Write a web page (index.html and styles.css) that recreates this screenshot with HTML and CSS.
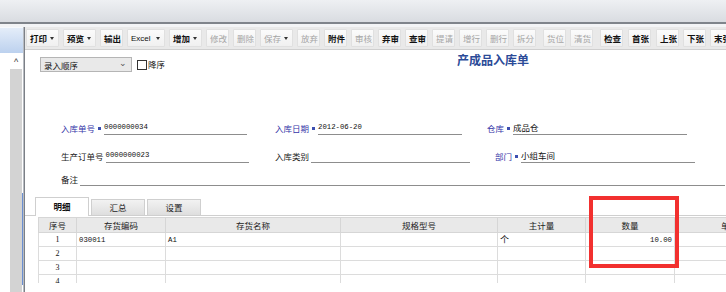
FILE: index.html
```html
<!DOCTYPE html>
<html lang="zh-CN">
<head>
  <meta charset="UTF-8">
  <title>产成品入库单</title>
  <link rel="stylesheet" href="styles.css">
</head>
<body>
  <div class="topband"></div>
  <div class="workspace">
    <div class="side">
      <div class="side-head"></div>
      <div class="side-body">
        <div class="side-gap"></div>
        <div class="scroll">
          <div class="scroll-up">&#94;</div>
          <div class="scroll-track"></div>
        </div>
        <div class="side-strip"><div class="strip-blue"></div></div>
      </div>
    </div>
    <div class="divider"></div>
    <div class="main">
      <div class="toolbar">
        <span class="tb dd first">打印<i class="caret"></i></span>
        <span class="tb dd">预览<i class="caret"></i></span>
        <span class="tb">输出</span>
        <span class="tb dd excel">Excel<i class="caret"></i></span>
        <span class="tb dd">增加<i class="caret"></i></span>
        <span class="tb off">修改</span>
        <span class="tb off">删除</span>
        <span class="tb dd off">保存<i class="caret"></i></span>
        <span class="tb off">放弃</span>
        <span class="tb">附件</span>
        <span class="tb off">审核</span>
        <span class="tb">弃审</span>
        <span class="tb">查审</span>
        <span class="tb off">提请</span>
        <span class="tb off">增行</span>
        <span class="tb off">删行</span>
        <span class="tb off">拆分</span>
        <span class="tb off wide">货位</span>
        <span class="tb off">清货</span>
        <span class="tb wide">检查</span>
        <span class="tb mid">首张</span>
        <span class="tb mid">上张</span>
        <span class="tb">下张</span>
        <span class="tb">末张</span>
      </div>

      <div class="content">
        <div class="head-row">
          <div class="select">录入顺序<span class="chev">&#8964;</span></div>
          <span class="check"></span>
          <span class="check-label">降序</span>
          <h1 class="doc-title">产成品入库单</h1>
        </div>

        <div class="form-row row1">
          <div class="field f1">
            <span class="label req">入库单号</span><i class="mark"></i>
            <span class="value w143">0000000034</span>
          </div>
          <div class="field f2">
            <span class="label req">入库日期</span><i class="mark"></i>
            <span class="value w144">2012-06-20</span>
          </div>
          <div class="field">
            <span class="label req">仓库</span><i class="mark"></i>
            <span class="value cn w174">成品仓</span>
          </div>
        </div>

        <div class="form-row row2">
          <div class="field f1">
            <span class="label">生产订单号</span>
            <span class="value w143">0000000023</span>
          </div>
          <div class="field f2b">
            <span class="label">入库类别</span>
            <span class="value w159"></span>
          </div>
          <div class="field">
            <span class="label req">部门</span><i class="mark"></i>
            <span class="value cn w174">小组车间</span>
          </div>
        </div>

        <div class="form-row row3">
          <div class="field">
            <span class="label">备注</span>
            <span class="value grow"></span>
          </div>
        </div>

        <div class="tabs">
          <span class="tab active">明细</span>
          <span class="tab">汇总</span>
          <span class="tab">设置</span>
        </div>

        <div class="grid-wrap">
          <table class="grid">
            <colgroup>
              <col class="c-no"><col class="c-code"><col class="c-name"><col class="c-spec">
              <col class="c-unit"><col class="c-qty"><col class="c-price">
            </colgroup>
            <thead>
              <tr><th>序号</th><th>存货编码</th><th>存货名称</th><th>规格型号</th><th>主计量</th><th>数量</th><th>单价</th></tr>
            </thead>
            <tbody>
              <tr><td class="num">1</td><td class="mono">030011</td><td class="mono">A1</td><td></td><td class="cn">个</td><td class="mono right">10.00</td><td></td></tr>
              <tr><td class="num">2</td><td></td><td></td><td></td><td></td><td></td><td></td></tr>
              <tr><td class="num">3</td><td></td><td></td><td></td><td></td><td></td><td></td></tr>
              <tr><td class="num">4</td><td></td><td></td><td></td><td></td><td></td><td></td></tr>
            </tbody>
          </table>
        </div>
      </div>
    </div>
  </div>
  <div class="highlight"></div>
</body>
</html>
```

FILE: styles.css
```css
body {
  margin: 0;
  width: 726px;
  height: 292px;
  overflow: hidden;
  position: relative;
  background: #ffffff;
  font-family: "Noto Sans CJK SC", "Liberation Sans", sans-serif;
  font-size: 8.5px;
  color: #222;
}
.topband {
  height: 22px;
  background: linear-gradient(to bottom, #eef0f3, #d9dce1);
  border-bottom: 2px solid #7f848b;
}
.workspace {
  display: flex;
  height: 268px;
  padding-top: 3px;
  background: #f3f4f6;
}
.side {
  width: 23px;
  display: flex;
  flex-direction: column;
}
.side-head {
  height: 25px;
  background: linear-gradient(to bottom, #e4edf9, #bcd1ee);
  border-top: 1px solid #f6f9fd;
}
.side-body {
  flex: 1;
  display: flex;
  background: #ffffff;
}
.side-gap {
  width: 10px;
}
.scroll {
  width: 12px;
  display: flex;
  flex-direction: column;
}
.scroll-up {
  height: 16px;
  font-size: 9px;
  line-height: 18px;
  text-align: center;
  color: #333;
  font-family: "Liberation Sans", sans-serif;
}
.scroll-track {
  flex: 1;
  background: #d3d3d3;
}
.side-strip {
  width: 1px;
  display: flex;
  flex-direction: column;
  justify-content: flex-end;
  padding-bottom: 10px;
}
.strip-blue {
  height: 92px;
  background: #6b8fd1;
  width: 2px;
}
.divider {
  width: 2px;
  background: #fafafa;
  border-left: 1px solid #b8bcc2;
  border-right: 1px solid #7c8087;
}
.main {
  flex: 1;
  display: flex;
  flex-direction: column;
  background: #ffffff;
}
.toolbar {
  height: 22px;
  display: flex;
  align-items: center;
  background: #e9e9e9;
  border-bottom: 1px solid #cfcfcf;
  white-space: nowrap;
  overflow: hidden;
}
.tb {
  flex: none;
  display: flex;
  align-items: center;
  box-sizing: border-box;
  width: 23px;
  height: 18px;
  padding-left: 3px;
  margin-left: 4px;
  background: linear-gradient(to bottom, #fbfbfb, #f0f0f0);
  border: 1px solid #e0e0e0;
  border-radius: 1px;
  color: #111;
  font-weight: bold;
}
.tb.first {
  margin-left: 1px;
}
.tb.dd {
  width: 33px;
}
.tb.excel {
  width: 38px;
  font-family: "Liberation Sans", sans-serif;
  font-weight: normal;
  font-size: 8px;
}
.tb.off {
  color: #a5a5a5;
  font-weight: normal;
}
.tb.wide {
  margin-left: 7px;
}
.tb.mid {
  margin-left: 5px;
}
.caret {
  margin-left: auto;
  margin-right: 4px;
  width: 0;
  height: 0;
  border-left: 2.5px solid transparent;
  border-right: 2.5px solid transparent;
  border-top: 3px solid #333;
}
.content {
  flex: 1;
  overflow: hidden;
}
.head-row {
  display: flex;
  align-items: flex-start;
  padding: 7px 0 0 15px;
  height: 16px;
}
.select {
  box-sizing: border-box;
  width: 92px;
  height: 15px;
  display: flex;
  align-items: center;
  padding-left: 3px;
  background: #e9e9e9;
  border: 1px solid #b5b5b5;
  color: #111;
}
.chev {
  margin-left: auto;
  margin-right: 4px;
  font-size: 9px;
  line-height: 9px;
  color: #555;
  padding-bottom: 4px;
}
.check {
  box-sizing: border-box;
  width: 10px;
  height: 10px;
  margin: 3px 1px 0 5px;
  border: 1px solid #333;
  background: #fff;
}
.check-label {
  line-height: 15px;
  color: #111;
}
.doc-title {
  margin: -5px 0 0 292px;
  font-size: 12px;
  line-height: 16px;
  font-weight: bold;
  color: #2b4b98;
}
.form-row {
  display: flex;
  height: 14px;
}
.row1 {
  margin-top: 48px;
}
.row2 {
  margin-top: 14px;
}
.row3 {
  margin-top: 9px;
}
.field {
  display: flex;
  align-items: flex-end;
  height: 14px;
}
.form-row > .field:first-child {
  margin-left: 36px;
}
.f1 {
  width: 214px;
}
.f2 {
  width: 212px;
}
.f2b {
  width: 220px;
}
.label {
  line-height: 14px;
  color: #222;
  margin-right: 2px;
}
.label.req {
  color: #3535a8;
}
.mark {
  width: 3px;
  height: 3px;
  background: #3d4fb0;
  margin: 0 3px 5px 1px;
}
.value {
  box-sizing: border-box;
  height: 13px;
  border-bottom: 1px solid #8d8d8d;
  font-family: "Liberation Mono", monospace;
  font-size: 7.3px;
  line-height: 10px;
  color: #111;
}
.value.cn {
  font-family: "Noto Sans CJK SC", sans-serif;
  font-size: 8.5px;
  line-height: 11px;
}
.w143 {
  width: 143px;
}
.w144 {
  width: 144px;
}
.w159 {
  width: 159px;
}
.w174 {
  width: 174px;
}
.grow {
  flex: 1;
  width: 645px;
}
.tabs {
  display: flex;
  align-items: flex-end;
  height: 18px;
  margin-top: 11px;
  padding-left: 10px;
  border-bottom: 1px solid #cfcfcf;
}
.tab {
  box-sizing: border-box;
  width: 54px;
  height: 16px;
  margin-right: 2px;
  text-align: center;
  line-height: 15px;
  background: linear-gradient(to bottom, #f2f2f2, #dedede);
  border: 1px solid #cfcfcf;
  border-bottom: none;
  color: #222;
}
.tab.active {
  height: 19px;
  margin-bottom: -1px;
  background: #ffffff;
  font-weight: bold;
  line-height: 17px;
  color: #111;
}
.grid-wrap {
  height: 66px;
  margin: 1px 0 0 13px;
  overflow: hidden;
}
.grid {
  border-collapse: collapse;
  table-layout: fixed;
  width: 746px;
}
.c-no { width: 38px; }
.c-code { width: 89px; }
.c-name { width: 175px; }
.c-spec { width: 157px; }
.c-unit { width: 88px; }
.c-qty { width: 89px; }
.c-price { width: 110px; }
.grid th {
  height: 14px;
  padding: 0;
  background: #e9e9e9;
  border: 1px solid #d6d6d6;
  font-weight: normal;
  font-size: 8.5px;
  line-height: 13px;
  color: #222;
  text-align: center;
  white-space: nowrap;
  overflow: hidden;
}
.grid td {
  height: 13px;
  padding: 0 2px;
  border: 1px solid #dcdcdc;
  font-size: 8px;
  line-height: 12px;
  color: #111;
  white-space: nowrap;
  overflow: hidden;
}
.grid td.cn {
  font-size: 9px;
  color: #111;
}
.grid td.num {
  text-align: center;
  font-family: "Liberation Serif", serif;
  font-size: 8px;
}
.grid td.mono {
  font-family: "Liberation Mono", monospace;
  font-size: 7.3px;
}
.grid td.right {
  text-align: right;
}
.highlight {
  position: absolute;
  left: 589px;
  top: 196px;
  width: 82px;
  height: 64px;
  border: 4px solid #f2302f;
}
```
